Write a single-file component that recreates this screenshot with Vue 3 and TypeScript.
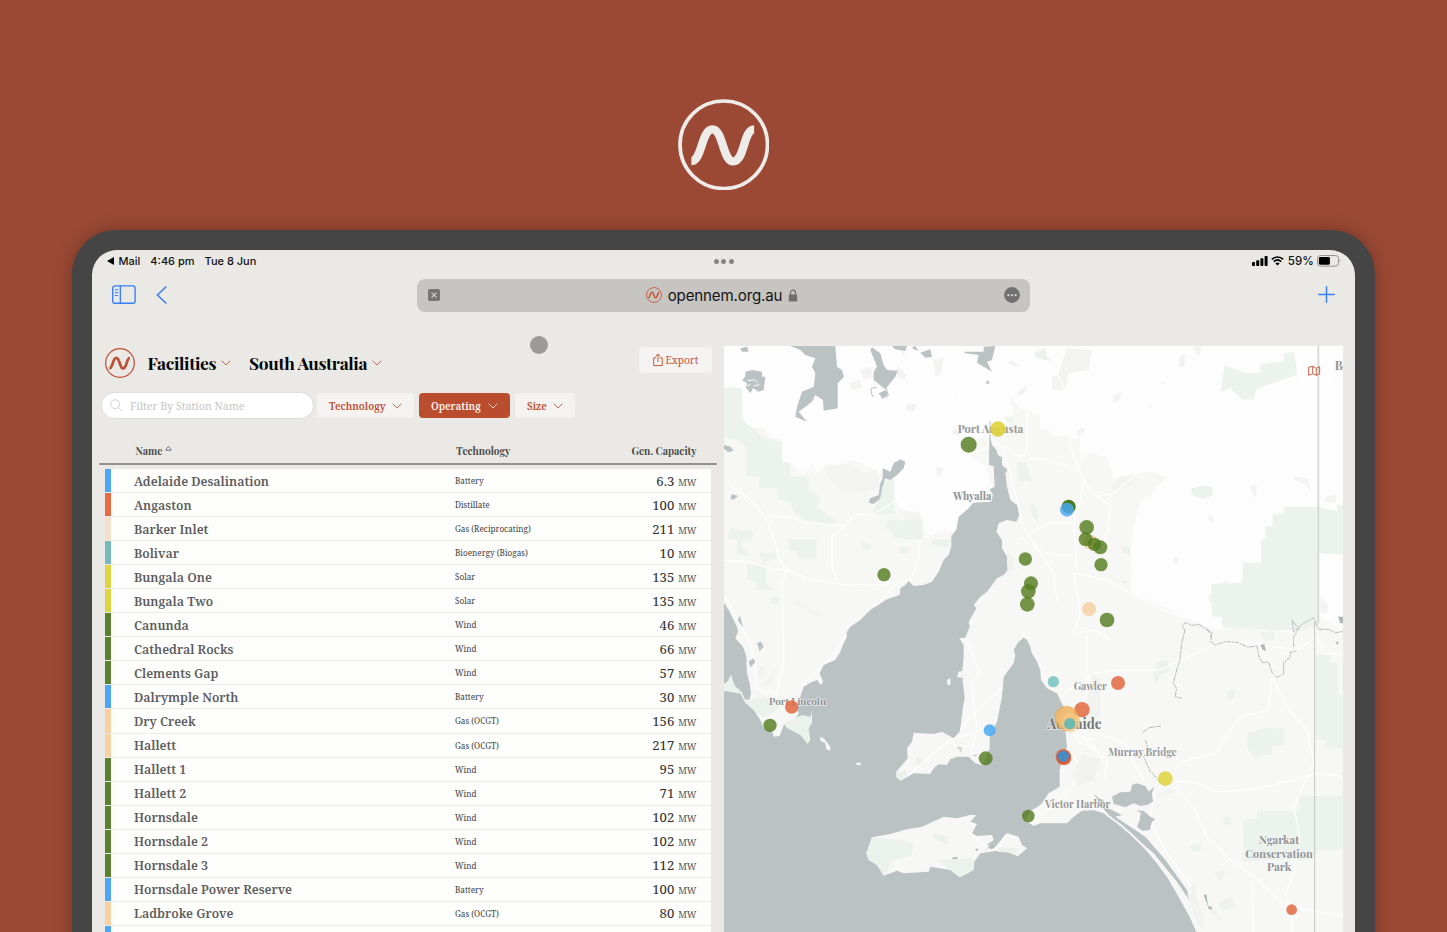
<script setup lang="ts">
interface Facility { name: string; tech: string; capacity: string; color: string }
interface Marker { x: number; y: number; r: number; color: string; o?: number }

const BATTERY = '#4ea6f0'
const DISTILLATE = '#e46b44'
const WIND = '#5c812e'
const SOLAR = '#ddd345'
const OCGT = '#f8d0a2'

const facilities: Facility[] = [
  { name: 'Adelaide Desalination', tech: 'Battery', capacity: '6.3', color: BATTERY },
  { name: 'Angaston', tech: 'Distillate', capacity: '100', color: DISTILLATE },
  { name: 'Barker Inlet', tech: 'Gas (Reciprocating)', capacity: '211', color: '#f4dfc8' },
  { name: 'Bolivar', tech: 'Bioenergy (Biogas)', capacity: '10', color: '#75b9b9' },
  { name: 'Bungala One', tech: 'Solar', capacity: '135', color: SOLAR },
  { name: 'Bungala Two', tech: 'Solar', capacity: '135', color: SOLAR },
  { name: 'Canunda', tech: 'Wind', capacity: '46', color: WIND },
  { name: 'Cathedral Rocks', tech: 'Wind', capacity: '66', color: WIND },
  { name: 'Clements Gap', tech: 'Wind', capacity: '57', color: WIND },
  { name: 'Dalrymple North', tech: 'Battery', capacity: '30', color: BATTERY },
  { name: 'Dry Creek', tech: 'Gas (OCGT)', capacity: '156', color: OCGT },
  { name: 'Hallett', tech: 'Gas (OCGT)', capacity: '217', color: OCGT },
  { name: 'Hallett 1', tech: 'Wind', capacity: '95', color: WIND },
  { name: 'Hallett 2', tech: 'Wind', capacity: '71', color: WIND },
  { name: 'Hornsdale', tech: 'Wind', capacity: '102', color: WIND },
  { name: 'Hornsdale 2', tech: 'Wind', capacity: '102', color: WIND },
  { name: 'Hornsdale 3', tech: 'Wind', capacity: '112', color: WIND },
  { name: 'Hornsdale Power Reserve', tech: 'Battery', capacity: '100', color: BATTERY },
  { name: 'Ladbroke Grove', tech: 'Gas (OCGT)', capacity: '80', color: OCGT },
]

const G = '#517a1b'
const R = '#e26840'
const B = '#4ba9f5'
const O = '#f5cd9c'
const T = '#6dbdba'
const Y = '#dfd23c'

const markers: Marker[] = [
  { x: 745, y: 314, r: 24, color: G },
  { x: 833, y: 267, r: 23, color: Y, o: 0.9 },
  { x: 491, y: 704, r: 20, color: G },
  { x: 915, y: 657, r: 20, color: G },
  { x: 932, y: 730, r: 21, color: G },
  { x: 924, y: 754, r: 22, color: G },
  { x: 921, y: 793, r: 22, color: G },
  { x: 1045, y: 500, r: 21, color: '#3f7512', o: 0.95 },
  { x: 1040, y: 509, r: 21, color: B, o: 0.82 },
  { x: 1099, y: 562, r: 22, color: G },
  { x: 1110, y: 606, r: 22, color: O },
  { x: 1096, y: 598, r: 21, color: G },
  { x: 1122, y: 613, r: 20, color: G },
  { x: 1140, y: 622, r: 21, color: G },
  { x: 1142, y: 674, r: 20, color: G },
  { x: 1106, y: 807, r: 21, color: O },
  { x: 1160, y: 840, r: 22, color: G },
  { x: 214, y: 1101, r: 20, color: R, o: 0.85 },
  { x: 149, y: 1156, r: 20, color: G },
  { x: 808, y: 1171, r: 18, color: B, o: 0.85 },
  { x: 796, y: 1255, r: 21, color: G },
  { x: 924, y: 1428, r: 19, color: G },
  { x: 999, y: 1025, r: 17, color: T },
  { x: 1193, y: 1029, r: 21, color: R, o: 0.85 },
  { x: 1085, y: 1109, r: 23, color: R, o: 0.85 },
  { x: 1040, y: 1136, r: 37, color: '#eda94f', o: 0.6 },
  { x: 1036, y: 1130, r: 33, color: '#eda94f', o: 0.45 },
  { x: 1035, y: 1132, r: 29, color: '#f5bd77', o: 0.7 },
  { x: 1050, y: 1148, r: 30, color: '#f5cd8c', o: 0.5 },
  { x: 1048, y: 1151, r: 17, color: '#5db8b5', o: 0.9 },
  { x: 1029, y: 1250, r: 23, color: '#dc502a', o: 0.75 },
  { x: 1031, y: 1254, r: 22, color: '#dc502a', o: 0.75 },
  { x: 1029, y: 1249, r: 17, color: '#398fd3', o: 0.9 },
  { x: 1335, y: 1316, r: 22, color: Y, o: 0.85 },
  { x: 1714, y: 1709, r: 16, color: R, o: 0.85 },
]

const labels = [
  { t: 'Port Augusta', x: 712, y: 279, w: 197, s: 32, c: '#969797' },
  { t: 'Whyalla', x: 699, y: 479, w: 114, s: 31, c: '#8d9193' },
  { t: 'Port Lincoln', x: 146, y: 1095, w: 171, s: 30, c: '#8d9193' },
  { t: 'Gawler', x: 1060, y: 1049, w: 99, s: 31, c: '#96989a' },
  { t: 'Adelaide', x: 981, y: 1168, w: 163, s: 44, c: '#737678' },
  { t: 'Murray Bridge', x: 1164, y: 1247, w: 205, s: 31, c: '#96989a' },
  { t: 'Victor Harbor', x: 974, y: 1405, w: 196, s: 31, c: '#96989a' },
  { t: 'Ngarkat', x: 1616, y: 1513, w: 120, s: 32, c: '#8f9293' },
  { t: 'Conservation', x: 1575, y: 1553, w: 202, s: 32, c: '#8f9293' },
  { t: 'Park', x: 1640, y: 1594, w: 73, s: 32, c: '#8f9293' },
]

const wave = 'M94 242C126 242 124 147 157 147C190 147 187 243 220 243C253 243 250 147 282 147'
</script>

<template>
  <main class="stage">
    <svg class="hero-logo" viewBox="54 56 274 274" fill="none" stroke="#eeebe8">
      <circle cx="191" cy="193" r="131" stroke-width="11" />
      <path :d="wave" stroke-width="25" />
    </svg>

    <section class="tablet">
      <div class="screen">
        <header class="status">
          <div class="status-left"><span class="back-mark"></span><span>Mail</span><span class="time">4:46 pm</span><span>Tue 8 Jun</span></div>
          <div class="dots"><i></i><i></i><i></i></div>
          <div class="status-right">
            <svg class="signal" viewBox="0 0 16 10"><rect x="0" y="6" width="3" height="4" rx=".8" /><rect x="4.2" y="4.3" width="3" height="5.7" rx=".8" /><rect x="8.4" y="2.3" width="3" height="7.7" rx=".8" /><rect x="12.6" y="0" width="3" height="10" rx=".8" /></svg>
            <svg class="wifi" viewBox="0 0 13 10" fill="none" stroke="#000" stroke-width="1.6"><path d="M.8 3.4C4 .2 9 .2 12.2 3.4M2.8 5.6C5 3.5 8 3.5 10.2 5.6" /><path d="M4.4 7.4Q6.5 5.6 8.6 7.4L6.5 9.6Z" fill="#000" stroke="none" /></svg>
            <span>59%</span>
            <svg class="battery" viewBox="0 0 24 12"><rect x=".5" y=".5" width="21" height="10.6" rx="3" fill="none" stroke="#93938f" /><rect x="1.9" y="1.9" width="11" height="7.8" rx="1.4" /><path d="M22.7 4.2q1.5 1.5 0 3z" fill="#888" /></svg>
          </div>
        </header>

        <div class="toolbar">
          <svg class="sidebar-icon" viewBox="0 0 24 20" fill="none" stroke="#3b7ff5" stroke-width="1.4"><rect x=".7" y=".9" width="22.4" height="17.4" rx="2.2" /><path d="M8.4 1v17.2" /><path d="M2.8 4.8h3.4M2.8 7.6h3.4M2.8 10.4h3.4" stroke-width="1" /></svg>
          <svg class="back-icon" viewBox="0 0 11 18" fill="none" stroke="#3b7ff5" stroke-width="1.6"><path d="M9.8 1L1.4 9l8.4 8" stroke-linecap="round" stroke-linejoin="round" /></svg>
          <div class="address">
            <svg class="reader" viewBox="0 0 12 12"><rect width="12" height="12" rx="1.8" fill="#757575" /><path d="M3.6 3.6l4.8 4.8M8.4 3.6L3.6 8.4" stroke="#d3d2cf" stroke-width="1.2" /></svg>
            <div class="url">
              <svg class="favicon" viewBox="54 56 274 274" fill="none" stroke="#c75032"><circle cx="191" cy="193" r="128" stroke-width="14" /><path :d="wave" stroke-width="27" /></svg>
              <span>opennem.org.au</span>
              <svg class="lock" viewBox="0 0 10 13"><path d="M2.5 6V3.6a2.5 2.5 0 0 1 5 0V6" fill="none" stroke="#6f6f6d" stroke-width="1.2" /><rect x=".8" y="5.6" width="8.4" height="6.8" rx="1.2" fill="#6f6f6d" /></svg>
            </div>
            <svg class="more" viewBox="0 0 16 16"><circle cx="8" cy="8" r="7.9" fill="#717171" /><g fill="#d3d2cf"><circle cx="4.4" cy="8.2" r="1.15" /><circle cx="8" cy="8.2" r="1.15" /><circle cx="11.6" cy="8.2" r="1.15" /></g></svg>
          </div>
          <svg class="plus" viewBox="0 0 16 16" stroke="#3b7ff5" stroke-width="1.4" stroke-linecap="round"><path d="M8 .7v14.6M.7 8h14.6" /></svg>
        </div>

        <div class="content">
          <section class="panel">
            <div class="heading">
              <svg class="brand" viewBox="54 56 274 274" fill="none" stroke="#bd4f32"><circle cx="191" cy="193" r="131" stroke-width="11" /><path :d="wave" stroke-width="25" /></svg>
              <h1 class="h-fac">Facilities</h1>
              <svg class="chev" viewBox="0 0 10 6"><path d="M.7.7L5 5L9.3.7" /></svg>
              <h1 class="h-sa">South Australia</h1>
              <svg class="chev" viewBox="0 0 10 6"><path d="M.7.7L5 5L9.3.7" /></svg>
              <button class="export"><svg viewBox="0 0 11 14" fill="none" stroke="#c4553b"><path d="M3.4 4.8H.7v8h9v-8H7M5.2 9V1M2.8 3.2L5.2.8l2.4 2.4" /></svg><span>Export</span></button>
            </div>

            <div class="filters">
              <div class="search"><svg viewBox="0 0 13 13" fill="none" stroke="#cfcfcf"><circle cx="5.4" cy="5.4" r="4.6" /><path d="M8.8 8.8L12.3 12.3" /></svg><span>Filter By Station Name</span></div>
              <button class="btn tech-btn"><span>Technology</span><svg class="chev" viewBox="0 0 10 6"><path d="M.7.7L5 5L9.3.7" /></svg></button>
              <button class="btn active"><span>Operating</span><svg class="chev" viewBox="0 0 10 6"><path d="M.7.7L5 5L9.3.7" /></svg></button>
              <button class="btn size-btn"><span>Size</span><svg class="chev" viewBox="0 0 10 6"><path d="M.7.7L5 5L9.3.7" /></svg></button>
            </div>

            <div class="table-head">
              <span class="th-name">Name <svg viewBox="0 0 7 5" fill="none" stroke="#555" stroke-width=".8"><path d="M.8 4.2Q1 3 2 2.4Q3.5-.8 5 2.4Q6 3 6.2 4.2Z" /></svg></span>
              <span class="th-tech">Technology</span>
              <span class="th-cap">Gen. Capacity</span>
            </div>
            <div class="rows">
              <div v-for="f in facilities" :key="f.name" class="row">
                <i class="tag" :style="{ background: f.color }"></i>
                <span class="name">{{ f.name }}</span>
                <span class="tech">{{ f.tech }}</span>
                <span class="cap">{{ f.capacity }}<small>MW</small></span>
              </div>
              <div class="row"><i class="tag" :style="{ background: BATTERY }"></i></div>
            </div>
          </section>

          <svg class="map" viewBox="11 18 1857 1758" preserveAspectRatio="none">
            <rect x="11" y="18" width="1857" height="1758" fill="#f7f7f5" />
            <!-- arid interior -->
            <path fill="#fdfdfd" d="M11 18H1868V870L1800 830L1760 855L1720 880L1650 870L1560 850L1510 870L1460 860L1400 835L1350 810L1270 775L1230 755L1235 690L1230 640L1240 560L1250 520L1262 480L1290 470L1320 430L1340 410L1300 395L1250 398L1180 425L1172 390L1160 345L1140 350L1110 335L1082 362L1078 330L1080 290L1060 300L1040 285L1000 290L985 270L960 265L958 225L900 205L870 170L880 230L850 250L790 290L740 310L750 350L800 380L815 440L780 480L745 505L715 530L700 575L660 575L640 585L610 580L605 540L580 520L540 505L522 475L525 410L470 395L430 375L400 360L350 375L320 370L290 400L275 372L250 405L225 385L215 370L185 365L185 300L150 290L125 262L90 268L70 245L65 145H11Z" />
            <g fill="#f3f3f1">
              <path d="M320 380l60-10 50 30 40-10 10 50-60 20-60-10-40-40zM225 780l80 40-10 12-75-40zM420 90l30-10 10 30-30 10zM640 60l30-5-10 50-15 5zM530 75l30 30-10 15-20-15zM560 190l30 5-10 20-25-5zM1040 25l75 5-10 60-60 10-10 50-40 0 0-40 20-10zM1378 45l18 0-5 38-15-3zM1415 20h30l-10 30zM1180 165l25-8-10 25-18 3zM1720 408l45 10 5 35-15-20-35-15zM1590 440l18-8v40l-10-5zM1465 520l15 10-3 20-12-10zM1360 650l15 5-8 18-8-8zM1460 770l60-50 5 60-40 30zM1800 770l25 30-5 20-20-5zM1190 415l60-15-5 25-50 35-25-20z" />
              <path d="M545 515l50 0 10 22-50 5zM650 380l20 5-10 25-15-10zM700 265l25 15-10 8-22-10zM1070 270l25-8-5 18-15 8zM1285 205l10-10 0 10zM1320 125l15 5-8 5zM1815 470l35-5-5 25-30-5zM1735 515l30-5-25 15zM540 25l15 20-8 5zM385 130l35-10 5 25-30 5zM870 60l25 15-8 5-20-10z" />
            </g>
            <!-- reserves -->
            <g fill="#ecf2ec">
              <path d="M11 143H65V240L130 290L185 310V365L210 370V410H265V450L300 470L290 500L350 545L340 552L260 545L225 520L210 490L170 475V445H115V410H78V320L50 302L11 290Z" />
              <path d="M500 542L607 538V598H560L520 592L515 575L498 568ZM205 598H288V657H232V632H205ZM80 675L138 670V730L160 750H105V725L80 718ZM30 563L100 575L95 600L60 610L90 650L50 640L50 600L22 595ZM635 598H695L685 620L650 618L635 610ZM425 600L455 620L445 630L425 625ZM150 775L180 770L172 792L152 792ZM490 425L520 415V523H457L470 490ZM540 620L570 625L560 640L535 640ZM120 638l48 0v20l-45 8z" />
              <path d="M1512 75L1575 100L1620 98V72L1690 65V40L1722 36L1730 105L1610 145L1600 178L1565 178L1530 145L1502 155ZM1415 445L1440 437L1477 440L1475 468L1445 476L1412 463ZM940 40L975 25L980 50L1000 65L950 55Z" />
              <path d="M1473 732L1566 728L1568 668H1622V598H1635V560H1657V523H1690V501H1795L1850 513V495H1868V645L1795 640V850L1750 870H1640L1600 865L1505 862V830H1475Z" />
              <path d="M1567 1440L1610 1435V1412H1735V1368H1868V1528L1785 1530V1558H1690L1570 1565ZM1785 945H1830V970H1852V1065H1868V1225L1815 1222V1200H1785ZM1582 1180L1640 1165H1690V1215L1655 1220V1242L1600 1252L1580 1220ZM1310 965l30-5 10 30-30 15-15 30-5-40z" />
              <path d="M890 370l25-5 20 60-20-5-20 10zM930 490l20 10 5 50-20-20zM1208 620l20 0v25l-22-8zM1208 722l15 0-5 8-15 0zM850 230h30v15h-20zM1408 1520l30-10 5 20-20 8zM1510 1430l20 0v25h-20zM1620 878l40-5 0 25-30 5zM1520 1055l30-8-10 25-20 5zM895 155l25-18-8 22-20 8z" />
            </g>
            <!-- roads -->
            <g fill="none" stroke="#fff" stroke-width="3.4" stroke-linejoin="round">
              <path d="M11 425L85 475L135 530L165 610L175 655L200 690L185 730L190 900L190 980L175 1020L170 1065L110 1045L105 970L85 900L11 765M135 530L200 528L250 545L375 560L400 525L460 522L530 480L600 395L700 345L760 340L830 310M11 662L90 665L150 687L200 690L260 715L355 732L480 735L570 722L595 660L595 610L680 550L750 490M375 560L335 585L335 680L355 732M530 725L450 820L380 880L345 940L250 1030" />
              <path d="M660 25L710 120L720 200L770 260L845 320L870 400L890 480L905 555L960 640L1000 700L1010 790M960 180L920 220L920 340L895 350L850 320M980 30L1005 90L1045 170L1030 240L1060 350L1095 430L1130 470L1180 460L1240 410L1290 370L1400 300L1520 265L1600 215L1700 180L1868 130M930 358H970L1065 385L1090 410L1080 480L1060 550L1070 700L1160 720L1230 760L1350 820L1480 860M1130 470L1170 495L1165 560L1145 630M925 580L990 550L1060 550M900 590L960 635L1060 650M1060 700L1080 820L1060 880L1130 870L1165 900" />
              <path d="M735 893L775 990L755 1040L770 1170L750 1240L790 1240M700 1195L750 1130L850 1040M560 1310L640 1240L690 1200L780 1170M750 1480L805 1528L850 1485L960 1440M900 870L960 990L1020 1080L1070 1180L1160 1265L1150 1320M1020 1070L1120 1000L1200 990L1320 990L1480 915L1570 908L1730 930L1790 890L1810 940L1868 943M1655 1010L1700 1100L1760 1170L1780 1270L1720 1400L1740 1500L1720 1600L1695 1660L1714 1710M1340 1320L1430 1330L1490 1355L1590 1350L1720 1320L1790 1300L1868 1310M1340 1320L1420 1400L1460 1490L1530 1560L1600 1610L1690 1690L1760 1710L1868 1727M1370 1270L1480 1240L1520 1190L1560 1130L1645 1110L1655 1010M1300 1350L1290 1450L1340 1540L1420 1650L1450 1776M1595 1620L1600 1776M1714 1710V1776M1110 1080L1150 1060L1200 990M1130 1180L1210 1210L1270 1320M1060 1250L1090 1300L1000 1400L940 1430" />
              <path d="M1050 1180l60 25 40 60M1060 1190l80 10M1065 1170l60 0 40-30M1070 1205l30 10 10-30M1100 870V1000M1110 1000L1090 1100" stroke-width="3" />
            </g>
            <!-- gulfs and ocean -->
            <g fill="#bac2c4">
              <path d="M11 788L25 810L35 830L50 860L53 875L45 895L68 920L78 950L80 1000L88 1030L92 1060L88 1078L75 1080L65 1060L42 1042L32 1003L22 1025L11 1032Z" />
              <path d="M11 1052L40 1048L60 1060L75 1088L100 1110L120 1140L130 1165L155 1172L160 1190L178 1188L190 1155L220 1145L235 1120L228 1100L240 1070L250 1040L270 1028L290 1020L302 1035L308 1025L298 1000L310 975L345 960L358 940L370 910L380 890L378 878L390 860L420 840L450 810L500 778L538 765L540 745L555 735L565 723L580 738L610 735L635 725L655 695L670 660L685 645L693 620L693 588L708 570L715 530L745 505L758 488L812 485L818 465L808 448L823 440L820 378L806 375L808 243L811 243L810 290L815 315L828 330L832 345L845 352L845 375L862 390L855 400L860 440L870 480L890 495L897 525L888 545L860 540L835 550L828 575L845 600L845 625L860 650L862 690L850 705L830 715L800 755L780 770L760 795L768 805L745 845L748 860L735 893L717 895L730 915L730 950L725 1000L733 1075L728 1100L722 1150L718 1175L700 1195L688 1188L665 1175L640 1182L600 1180L580 1178L575 1205L560 1225L562 1255L545 1275L528 1295L528 1310L540 1322L560 1310L580 1300L630 1302L640 1285L655 1273L680 1275L690 1258L710 1250L745 1250L765 1270L785 1275L800 1245L808 1225L808 1190L830 1145L845 1070L850 1010L880 970L885 945L880 930L895 905L910 893L920 900L930 920L935 940L950 965L960 990L962 1020L980 1045L1010 1060L1025 1090L1033 1110L1036 1180L1040 1220L1025 1260L1018 1290L1018 1340L985 1360L965 1390L950 1402L930 1412L915 1440L940 1458L960 1450L1040 1450L1060 1430L1085 1412L1120 1411L1150 1420L1200 1455L1280 1530L1340 1610L1380 1680L1410 1735L1428 1776H11Z" />
              <path d="M1175 1370L1200 1357L1230 1355L1235 1335L1250 1330L1275 1338L1285 1355L1302 1340L1295 1360L1298 1385L1280 1395L1260 1398L1240 1390L1215 1402L1180 1392ZM1245 1410L1270 1413L1290 1430L1305 1438L1295 1445L1288 1470L1265 1472L1250 1460L1260 1435Z" />
              <path d="M1120 1360l15 15 15 5 0 18 25 12 30 15-20 5 90 60 60 70 65 90 10 35-40-60-70-85-70-60-45-25-30-20 10-10-25-30z" />
              <path d="M210 18H345L350 80L365 90L371 110L352 130V205L310 212L308 180L285 165L275 185L235 215L260 245L225 230L230 200L245 155L280 140L285 100L275 80L285 55L255 45L240 30ZM455 22L480 40L490 75L500 90L532 92L525 110L495 148L460 120V95L470 80L450 30ZM730 35H790V20L825 18L815 60L800 65L815 95L770 68L775 45L735 40ZM515 18h45l-5 15-30-5zM575 22l10-4 10 15-15-5zM600 38l30-10 5 22-20 3zM60 25l20-5 5 15-20 0zM795 130l8-10 5 12z" />
              <path d="M75 95L95 90L125 95V110L135 110L130 150L115 155L98 145L90 160L75 140L80 130L65 120L75 110ZM540 358L555 365L550 385L530 405L510 420L495 415L485 445L480 475L460 492L445 488L450 475L475 465L480 430L487 415V385L510 395L520 370ZM11 315l20 5 8 12-15 5-13-10zM30 475l5-12 18 5-15 12zM55 830l5 0 8 32-15-20zM110 910l12-5 8 15-12 13zM85 965l15-10 5 12-15 15z" />
              <path d="M475 160l22-10 5 15-15 12z" />
            </g>
            <path d="M470 142l-18 3 2 18 6 8M498 145l6 22-8 8" fill="none" stroke="#bac2c4" stroke-width="3" />
            <path d="M82 122l20-3 10 10M100 138l18-4M78 138l12-4" fill="none" stroke="#fdfdfd" stroke-width="3" />
            <g fill="#f7f7f5">
              <path d="M455 1492L510 1482L560 1468L605 1460L670 1430L710 1435L750 1425L768 1425L750 1445L770 1452L755 1480L770 1488L815 1485L820 1500L800 1515L825 1520L860 1480L895 1490L905 1515L920 1525L892 1549L860 1535L830 1532L780 1540L762 1565L760 1590L718 1612L690 1590L630 1580L625 1595L550 1600L530 1592L490 1607L470 1575L445 1560L438 1540Z" />
              <path d="M1210 1410L1235 1400L1262 1420L1250 1455L1235 1460L1215 1440ZM300 1190L310 1195L330 1220V1232L318 1228L315 1210L300 1202ZM680 1020L690 1014L690 1035L682 1035ZM405 1270L418 1267L424 1276L410 1275ZM715 995l10-2 0 20-15-2z" />
            </g>
            <g fill="#ebf1eb">
              <path d="M455 1492L540 1500L580 1510L575 1545L510 1565L500 1600L490 1607L470 1575L445 1560L438 1540ZM650 1560L762 1555L760 1590L718 1612L690 1590ZM75 1082L135 1070L180 1100L155 1120L130 1130L110 1120ZM190 1150L245 1125L270 1130L275 1112L275 1150L265 1165L270 1200L262 1212L240 1185L200 1165ZM530 1298L555 1290L560 1312L540 1322L528 1310ZM585 1250l30 10-20 20zM640 1480l40 10 0 25-40-20zM830 1520l60 5 0 15-60-5zM11 1040l20-30 15 30 22 20-18 0-39-8z" />
              <path d="M1160 1425Q1330 1540 1436 1776" fill="none" stroke="#f6f8f5" stroke-width="6" />
              <path d="M1410 1640l20-10-5 30 30 110M1480 1600l40-10-20 30zM1490 1690l40-20 20 30-40 10z" fill="#eef1ed" />
            </g>
            <path d="M795 1528l18-14 12 6-8 8zM765 1528l8-3 0 7-6 0zM695 1552l18-1-4 7-12 0z" fill="#b4bcbe" />
            <path d="M700 1190l10 25 15 5-2 20-12-18zM755 1245l18-4-8 10zM1100 1070l12 10-4 8z" fill="#c3c9ca" opacity=".7" />
            <path d="M750 1480L805 1528H830L855 1485M560 1310L640 1240L680 1208L715 1218H750" fill="none" stroke="#fff" stroke-width="4" />
            <!-- suburbs and scrub -->
            <path fill="#f2f3f0" d="M860 640l22 15-5 35-15 5zM890 700l10 0-5 12zM130 1035l30-45 12-5-15 40-20 15zM115 980l15 0 0 30-15 10zM1310 1360l45-15 5 12-45 15zM1400 1660l15 0 35 70 0 40-20-20zM1460 1690l45 40-5 12-30-25zM1115 1000l25 20 0 100-30 60-25-30zM1090 1240l50 20-20 60-50 20-15-40z" />
            <!-- river -->
            <g fill="none" stroke="#b3babc" stroke-width="3" stroke-dasharray="13 3 6 2">
              <path d="M1394 870l-10 40-5 50-10 30-10 40 10 15-5 25 20 5M1394 870L1385 860l10-12 20 8 20-3 25 15 15 10-5 15M1460 870l15 15-5 20 15 10 30-10 35 2 35 15 25-5 5 30 10 20 20 0 10 30 15 15 20-10 0-35 20-15 0-15 20-5M1720 920l0-30 15-25-20-25 5 35 30-25 30-17 15 35 30 0 20 10 33-5M1322 1158l-35 5-20 15M1275 1200l10 30-15 20 20 45 20 20 10 15" />
            </g>
            <path d="M1620 915l12-3 5 22-10-5zM1853 830h15v20h-8zM1845 905h10l-4 10zM1450 1665l8-2 5 35 10 2 3 8-10 0z" fill="#aeb6b8" />
            <rect x="1733" y="57" width="110" height="74" rx="12" fill="#fdfdfd" opacity=".7" />
            <path d="M1794 18V850" stroke="#d5d5d5" stroke-width="5" />
            <path d="M1783 845V1776" stroke="#c4c5c4" stroke-width="3" />
            <path d="M1765 83l12-3 11 6 10-5v22l-10 4-11-5-12 5zM1777 80v22M1788 86v20" transform="translate(0 -1)" fill="none" stroke="#c96149" stroke-width="3" />
            <g class="map-labels">
              <text v-for="l in labels" :key="l.t" :x="l.x" :y="l.y" :font-size="l.s" :fill="l.c" :textLength="l.w" lengthAdjust="spacingAndGlyphs">{{ l.t }}</text>
              <text x="1843" y="91" font-size="36" fill="#929596">B</text>
            </g>
            <circle v-for="(m, i) in markers" :key="i" :cx="m.x" :cy="m.y" :r="m.r" :fill="m.color" :opacity="m.o ?? 0.8" />
          </svg>
          <i class="touch"></i>
        </div>
      </div>
    </section>
  </main>
</template>

<style>
html, body { margin: 0; overflow: hidden; }
</style>

<style scoped>
* { box-sizing: border-box; }
.stage { width: 1447px; height: 932px; overflow: hidden; background: #9b4934; display: flex; flex-direction: column; align-items: center; padding-top: 98.5px; }
.hero-logo { width: 91.5px; height: 91.5px; flex: none; display: block; }
.tablet { flex: none; width: 1303px; height: 900px; margin-top: 40px; background: #454545; border-radius: 44px; padding: 20px; box-shadow: 0 0 16px rgba(50, 25, 20, .38); }
.screen { height: 900px; background: #eae9e5; border-radius: 25px 25px 0 0; overflow: hidden; font-family: Inter, sans-serif; color: #111; }
.status { height: 22px; display: flex; align-items: center; justify-content: space-between; padding: 0 15px; font-size: 11px; font-weight: 500; position: relative; letter-spacing: 0; }
.status-left, .status-right { display: flex; align-items: center; }
.back-mark { border: 4px solid transparent; border-left: 0; border-right: 7px solid #000; margin-right: 4.5px; }
.time { margin: 0 10px; }
.dots { position: absolute; left: 622px; top: 9px; display: flex; gap: 2.4px; }
.dots i { width: 5px; height: 5px; border-radius: 50%; background: #858583; }
.signal { width: 16px; height: 10px; margin-right: 3px; }
.wifi { width: 13px; height: 10px; margin-right: 4px; }
.battery { width: 24px; height: 12px; margin-left: 3px; margin-right: -.8px; }
.status-right { font-size: 11.6px; }
.toolbar { height: 45px; display: flex; align-items: center; padding: 0 20px; }
.sidebar-icon { width: 24px; height: 20px; margin-right: 20px; }
.back-icon { width: 11px; height: 18px; }
.address { width: 613.5px; height: 33px; margin: 1px 0 0 249.5px; border-radius: 8px; background: #c7c5c1; display: flex; align-items: center; justify-content: space-between; padding: 0 10px 0 11.5px; }
.reader { width: 12px; height: 12px; }
.url { display: flex; align-items: center; font-size: 15.1px; color: #141414; letter-spacing: -.15px; }
.favicon { width: 16px; height: 16px; margin-right: 6px; }
.lock { width: 10px; height: 13px; margin-left: 6px; }
.more { width: 16px; height: 16px; }
.plus { width: 17px; height: 17px; margin-left: auto; }
.content { display: flex; align-items: flex-start; position: relative; padding-top: 29px; }
.touch { position: absolute; left: 438px; top: 19px; width: 18px; height: 18px; border-radius: 50%; background: #9c9b99; }
.panel { width: 631.5px; font-family: "Noto Serif", "DejaVu Serif", serif; }
.heading { height: 34px; display: flex; align-items: center; padding-left: 12.5px; padding-right: 11.5px; }
.brand { width: 30px; height: 30px; margin-right: 13px; }
h1 { margin: -1px 0 0; font: 700 17.4px "Playfair Display", "Liberation Serif", serif; color: #050505; white-space: nowrap; }
.h-fac { width: 69px; margin-right: 4px; letter-spacing: -.38px; }
.h-sa { width: 119px; margin-left: 18.5px; margin-right: 4px; letter-spacing: -.35px; }
.chev { width: 10px; height: 6px; fill: none; stroke: #c96a50; stroke-width: 1; flex: none; }
.export { margin: -6px 0 0 auto; width: 73px; height: 26px; border: 0; border-radius: 4px; background: #f4f3f1; color: #c4553b; display: flex; align-items: center; padding: 0 0 0 14px; gap: 2px; font: 10.2px "Noto Serif", "DejaVu Serif", serif; }
.export svg { width: 10.5px; height: 14px; margin-top: -1px; flex: none; }
.filters { display: flex; align-items: center; height: 27px; margin: 12px 0 0 9px; }
.search { width: 213px; height: 27px; border: 1px solid #dedddd; border-radius: 14px; background: #fff; display: flex; align-items: center; padding-left: 8px; color: #c6c6c6; font: 10.7px "Noto Serif", "DejaVu Serif", serif; white-space: nowrap; }
.search svg { width: 12.5px; height: 12.5px; margin-right: 7.5px; }
.btn { height: 25px; border: 0; border-radius: 4px; background: #f4f3f1; color: #c2492e; padding: 0 12px; display: flex; align-items: center; justify-content: space-between; font: 600 10px "Noto Serif", "DejaVu Serif", serif; }
.tech-btn { width: 97px; margin-left: 3px; }
.active { width: 91px; margin-left: 5px; background: #b94d2d; color: #fff4ee; }
.active .chev { stroke: #f3d3c8; }
.size-btn { width: 60px; margin-left: 5px; }
.table-head { margin: 22px 6.5px 0 6.5px; height: 24px; border-bottom: 2px solid #92918f; display: grid; grid-template-columns: 357.5px 150px 1fr; font: 700 10.2px "Playfair Display", "Liberation Serif", serif; color: #4b4b4b; line-height: 21px; }
.th-name { padding-left: 37px; display: flex; }
.th-name svg { width: 7px; height: 5px; margin: 5px 0 0 3px; }
.th-cap { text-align: right; padding-right: 20.5px; }
.rows { margin: 4px 13px 0 12.5px; }
.row { height: 24.05px; display: grid; grid-template-columns: 6px 23.5px 321px 110px 1fr; align-items: center; background: #fdfdfc; border-bottom: 1.2px solid #ebebe9; }
.tag { align-self: stretch; }
.name { grid-column: 3; font-weight: 600; font-size: 12.4px; color: #5c5c5c; padding-top: 1px; }
.tech { font-size: 8.2px; color: #3f3f3f; white-space: nowrap; }
.cap { text-align: right; padding-right: 14px; font-size: 13.1px; color: #303030; }
.cap small { font-size: 9.2px; font-stretch: condensed; margin-left: 4px; color: #555; }
.map { width: 619px; height: 586px; flex: none; display: block; }
.map-labels text { font-family: "Playfair Display", "Liberation Serif", serif; font-weight: 700; paint-order: stroke; stroke: #f7f7f5; stroke-width: 5px; stroke-opacity: .7; stroke-linejoin: round; }
</style>
